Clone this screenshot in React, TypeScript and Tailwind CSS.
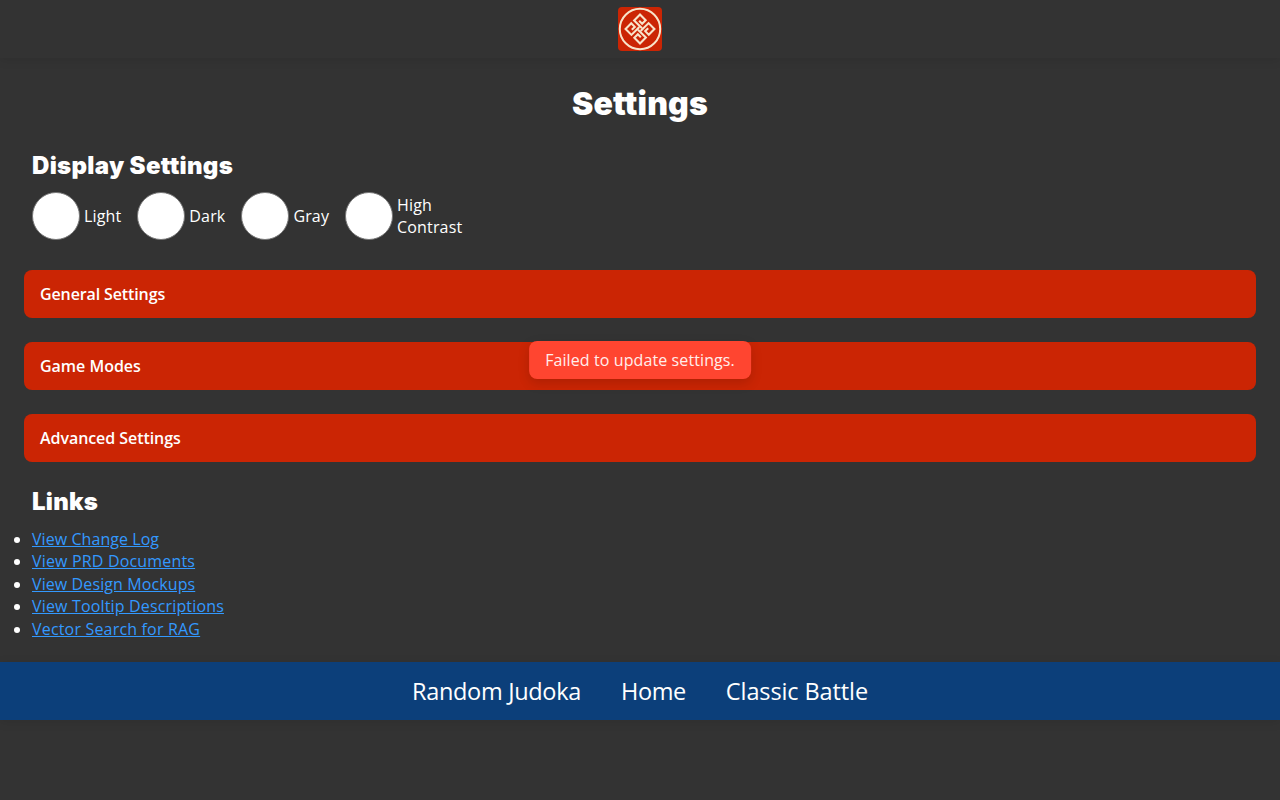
const HEADING = "font-['Inter'] font-black text-white";

const themes = ["Light", "Dark", "Gray", "High Contrast"];
const sections = [
  { label: "General Settings", tracking: "tracking-[-0.12px]" },
  { label: "Game Modes", tracking: "tracking-[-0.02px]" },
  { label: "Advanced Settings", tracking: "tracking-[-0.06px]" },
];
const links = [
  { label: "View Change Log", tracking: "tracking-[0.06px]" },
  { label: "View PRD Documents", tracking: "tracking-[0.17px]" },
  { label: "View Design Mockups", tracking: "tracking-[0.1px]" },
  { label: "View Tooltip Descriptions", tracking: "tracking-[0.16px]" },
  { label: "Vector Search for RAG", tracking: "tracking-[0.18px]" },
];
const pages = [
  { label: "Random Judoka", tracking: "tracking-[-0.3px]" },
  { label: "Home", tracking: "tracking-[-0.4px]" },
  { label: "Classic Battle", tracking: "tracking-[-0.1px]" },
];

function Logo() {
  return (
    <svg viewBox="0 0 44 44" className="size-11 rounded" aria-label="JU-DO-KON! Logo">
      <rect width="44" height="44" fill="#cb2504" />
      <circle cx="22" cy="22" r="20.2" fill="none" stroke="#f8e3c9" strokeWidth="2" />
      <g transform="translate(22 22) rotate(45)" fill="none" stroke="#f8e3c9" strokeWidth="2.1">
        {[0, 90, 180, 270].map((angle) => (
          <path key={angle} transform={`rotate(${angle})`} d="M-6.4 -5.2H-2.2V-10.2H-10.2V-1.9H1" />
        ))}
      </g>
    </svg>
  );
}

export default function App() {
  return (
    <div className="relative h-[800px] overflow-hidden bg-[#333333] font-['Open_Sans',sans-serif] text-base leading-[22.4px] text-white">
      <header className="flex h-[58px] items-center justify-center shadow-[0_2px_10px_rgba(0,0,0,0.1)]">
        <Logo />
      </header>
      <main>
        <h1 className={`${HEADING} flex h-[90px] items-center justify-center pt-0.5 text-[32px] tracking-[0.15px]`}>
          Settings
        </h1>
        <section className="px-8">
          <h2 className={`${HEADING} flex h-11 items-center pb-2 text-2xl tracking-[0.32px]`}>
            Display Settings
          </h2>
          <div className="flex h-12 gap-4">
            {themes.map((theme) => (
              <label key={theme} className="flex items-center gap-1 tracking-[0.15px]">
                <span className="size-12 shrink-0 rounded-full border border-[#767676] bg-white" />
                <span className="max-w-[68px]">{theme}</span>
              </label>
            ))}
          </div>
        </section>
        <div className="mt-[30px] flex flex-col gap-6 px-6">
          {sections.map(({ label, tracking }) => (
            <button
              key={label}
              className={`${tracking} flex h-12 items-center rounded-lg bg-[#cb2504] px-4 font-semibold`}
            >
              {label}
            </button>
          ))}
        </div>
        <section className="px-8 pt-6">
          <h2 className={`${HEADING} flex h-[42px] items-center pb-[10px] text-2xl tracking-[0.25px]`}>Links</h2>
          <ul className="h-[134px] list-disc">
            {links.map(({ label, tracking }) => (
              <li key={label}>
                <a href="#" className={`${tracking} text-[#3399ff] underline`}>
                  {label}
                </a>
              </li>
            ))}
          </ul>
        </section>
      </main>
      <nav className="flex h-[58px] items-center justify-center gap-10 bg-[#0c3f7a] text-[23.5px] shadow-[0_2px_10px_rgba(0,0,0,0.1)]">
        {pages.map(({ label, tracking }) => (
          <a key={label} href="#" className={tracking}>
            {label}
          </a>
        ))}
      </nav>
      <div
        role="status"
        className="absolute left-1/2 top-[341px] flex h-[38px] -translate-x-1/2 items-center whitespace-nowrap rounded-lg bg-[#ff4530] px-4 tracking-[0.1px] text-[#ffeeec] shadow-[0_4px_12px_rgba(0,0,0,0.15)]"
      >
        Failed to update settings.
      </div>
    </div>
  );
}
